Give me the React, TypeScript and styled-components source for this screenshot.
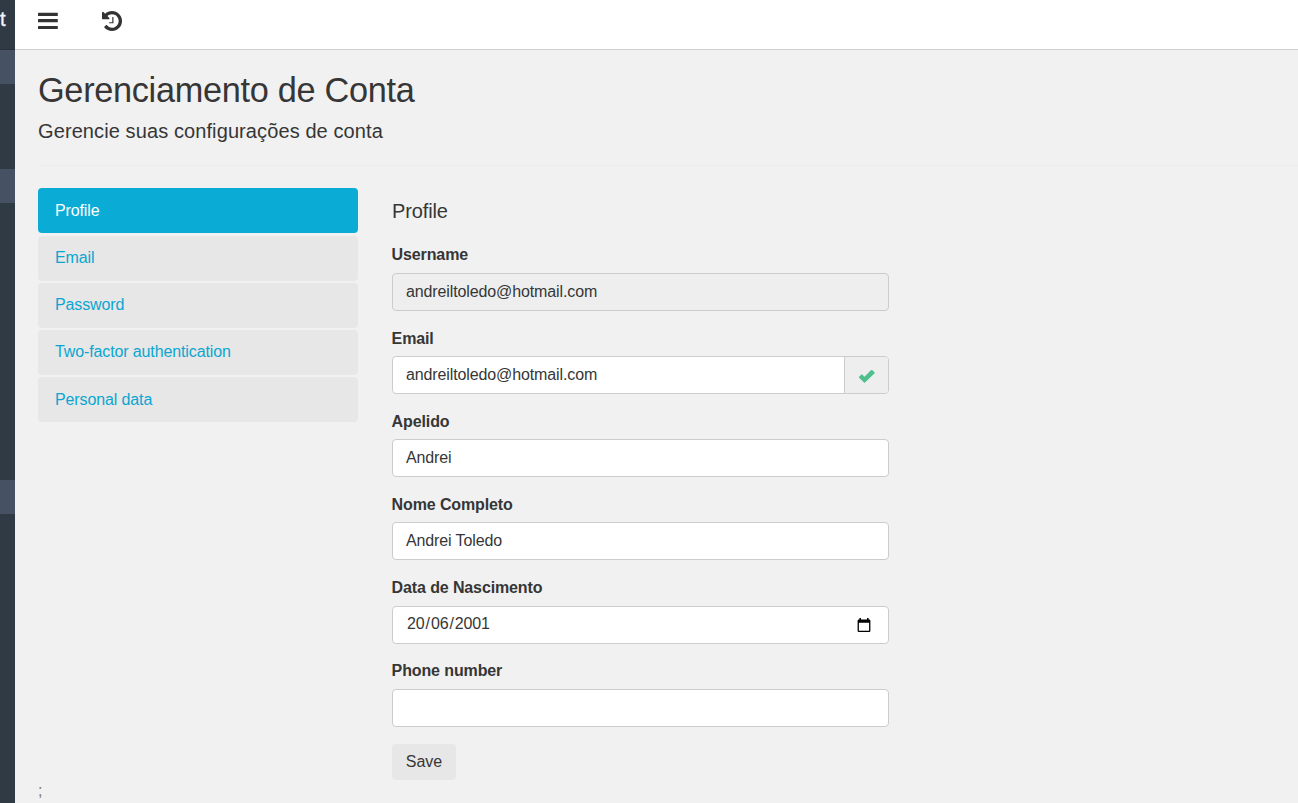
import React from "react";
import styled, { createGlobalStyle } from "styled-components";

const GlobalStyle = createGlobalStyle`
  * { box-sizing: border-box; }
  body {
    margin: 0;
    overflow: hidden;
    background: #f1f1f1;
    color: #363636;
    font: 16px/22.85px "Liberation Sans", Arial, sans-serif;
    letter-spacing: -0.12px;
  }
`;

const Page = styled.div`
  display: flex;
  width: 1298px;
  height: 803px;
  overflow: hidden;
`;

const Sidebar = styled.aside`
  flex: none;
  width: 15px;
  overflow: hidden;
  background: #303a45;
`;

const Brand = styled.div`
  height: 50px;
  padding-top: 7px;
  border-bottom: 1px solid #29323c;
  color: #f4f4f4;
  font-size: 20px;
  line-height: 24px;
  -webkit-text-stroke: 0.4px #f4f4f4;
`;

const SideBlock = styled.div<{ $gap: number }>`
  height: 34px;
  margin-top: ${(p) => p.$gap}px;
  background: #465263;
`;

const Main = styled.main`
  flex: 1;
  min-width: 0;
`;

const TopBar = styled.header`
  display: flex;
  align-items: flex-start;
  gap: 44px;
  height: 50px;
  padding: 11px 23px;
  background: #fff;
  border-bottom: 1px solid #cfcfcf;
  svg { display: block; fill: #333; }
`;

const Content = styled.div`
  padding: 19px 0 0 23px;
`;

const Title = styled.h1`
  margin: 0;
  font-size: 34.3px;
  font-weight: 400;
  line-height: 42px;
  letter-spacing: -0.31px;
`;

const Subtitle = styled.h2`
  margin: 9px 0 0;
  font-size: 20px;
  font-weight: 400;
  line-height: 22px;
  letter-spacing: 0.1px;
`;

const Rule = styled.hr`
  height: 1px;
  margin: 23px 0 22px;
  border: 0;
  background: #ececec;
`;

const Columns = styled.div`
  display: flex;
  align-items: flex-start;
  gap: 34px;
`;

const Nav = styled.nav`
  display: flex;
  flex-direction: column;
  gap: 2.25px;
  width: 320px;
  padding-top: 0.25px;
`;

const NavItem = styled.a<{ $active?: boolean }>`
  height: 45px;
  padding: 11.35px 17px 0;
  border-radius: 4px;
  background: ${(p) => (p.$active ? "#0aacd6" : "#e7e7e7")};
  color: ${(p) => (p.$active ? "#fff" : "#0aa6d1")};
`;

const Form = styled.form`
  width: 497px;
  padding-top: 12px;
`;

const FormTitle = styled.h3`
  margin: 0 0 20px;
  font-size: 20px;
  font-weight: 400;
  line-height: 22px;
`;

const Field = styled.div`
  height: 83.2px;
`;

const Label = styled.label`
  display: block;
  height: 30.8px;
  padding-top: 1.48px;
  margin-left: -0.4px;
  font-weight: 700;
  line-height: 23px;
`;

const Control = styled.div<{ $disabled?: boolean }>`
  display: flex;
  align-items: stretch;
  justify-content: space-between;
  height: 38px;
  overflow: hidden;
  border: 1px solid #ccc;
  border-radius: 4px;
  background: ${(p) => (p.$disabled ? "#eee" : "#fff")};
`;

const Value = styled.span`
  padding: 6px 13px;
  line-height: 24px;
`;

const DateValue = styled(Value)`
  padding-top: 5px;
`;

const DatePart = styled.span`
  padding: 0 1px;
`;

const Addon = styled.span`
  width: 44px;
  padding: 12px 0 0 13px;
  border-left: 1px solid #ccc;
  background: #eee;
  svg { display: block; }
`;

const CalendarSlot = styled.span`
  padding: 11px 17px 0 0;
  svg { display: block; }
`;

const SaveButton = styled.button`
  display: block;
  width: 64px;
  height: 36px;
  margin-top: 3px;
  padding: 0;
  border: 0;
  border-radius: 4px;
  background: #e7e7e7;
  color: #363636;
  font: inherit;
  letter-spacing: 0;
`;

const Stray = styled.div`
  height: 23px;
  margin-top: -1px;
  color: #777;
  line-height: 23px;
`;

const BarsIcon = () => (
  <svg width="20" height="20" viewBox="0 0 20 20">
    <rect y="1.7" width="19.8" height="3.2" rx="0.5" />
    <rect y="8.1" width="19.8" height="3.1" rx="0.5" />
    <rect y="14.9" width="19.8" height="3.2" rx="0.5" />
  </svg>
);

const HistoryIcon = () => (
  <svg width="20" height="20" viewBox="0 128 1536 1536">
    <path d="M1536 896q0 156-61 298t-164 245-245 164-298 61q-172 0-327-72.5t-264-204.5q-7-10-6.5-22.5t8.5-20.5l137-138q10-9 25-9 16 2 23 12 73 95 179 147t225 52q104 0 198.5-40.5t163.5-109.5 109.5-163.5 40.5-198.5-40.5-198.5-109.5-163.5-163.5-109.5-198.5-40.5q-98 0-188 35.5t-160 101.5l137 138q31 30 14 69-17 40-59 40h-448q-26 0-45-19t-19-45v-448q0-42 40-59 39-17 69 14l130 129q107-101 244.5-156.5t284.5-55.5q156 0 298 61t245 164 164 245 61 298z" />
    <path d="M790 590h90v474q0 14-14 14h-318v-90h242z" />
  </svg>
);

const CheckIcon = () => (
  <svg width="18" height="15" viewBox="0 0 18 15">
    <path d="M1.1 7.8 3.4 5.5Q3.8 5.1 4.2 5.5L6.5 7.7 13.2 1.1Q13.7.7 14.1 1.1L16.6 3.5Q17 3.9 16.6 4.3L7 13.6Q6.5 14 6 13.6L1.1 8.7Q.7 8.2 1.1 7.8Z" fill="#4fbf8b" />
  </svg>
);

const CalendarIcon = () => (
  <svg width="14" height="15" viewBox="0 0 14 15">
    <path d="M2.4 0H4V1.4H10V0H11.6V1.4H12.2Q13.4 1.4 13.4 2.7V12.8Q13.4 14 12.2 14H1.8Q.6 14 .6 12.8V2.7Q.6 1.4 1.8 1.4H2.4ZM1.9 4.7V12.7H12.1V4.7Z" fill="#000" fillRule="evenodd" />
  </svg>
);

const links = ["Profile", "Email", "Password", "Two-factor authentication", "Personal data"];

const TextField = ({ label, value, disabled }: { label: string; value: string; disabled?: boolean }) => (
  <Field>
    <Label>{label}</Label>
    <Control $disabled={disabled}>
      <Value>{value}</Value>
    </Control>
  </Field>
);

export default function App() {
  return (
    <Page>
      <GlobalStyle />
      <Sidebar>
        <Brand>t</Brand>
        <SideBlock $gap={0} />
        <SideBlock $gap={85} />
        <SideBlock $gap={277} />
      </Sidebar>
      <Main>
        <TopBar>
          <BarsIcon />
          <HistoryIcon />
        </TopBar>
        <Content>
          <Title>Gerenciamento de Conta</Title>
          <Subtitle>Gerencie suas configurações de conta</Subtitle>
          <Rule />
          <Columns>
            <Nav>
              {links.map((name, i) => (
                <NavItem key={name} $active={i === 0}>{name}</NavItem>
              ))}
            </Nav>
            <Form>
              <FormTitle>Profile</FormTitle>
              <TextField label="Username" value="andreiltoledo@hotmail.com" disabled />
              <Field>
                <Label>Email</Label>
                <Control>
                  <Value>andreiltoledo@hotmail.com</Value>
                  <Addon><CheckIcon /></Addon>
                </Control>
              </Field>
              <TextField label="Apelido" value="Andrei" />
              <TextField label="Nome Completo" value="Andrei Toledo" />
              <Field>
                <Label>Data de Nascimento</Label>
                <Control>
                  <DateValue>
                    <DatePart>20</DatePart>/<DatePart>06</DatePart>/<DatePart>2001</DatePart>
                  </DateValue>
                  <CalendarSlot><CalendarIcon /></CalendarSlot>
                </Control>
              </Field>
              <TextField label="Phone number" value="" />
              <SaveButton type="button">Save</SaveButton>
            </Form>
          </Columns>
          <Stray>;</Stray>
        </Content>
      </Main>
    </Page>
  );
}
